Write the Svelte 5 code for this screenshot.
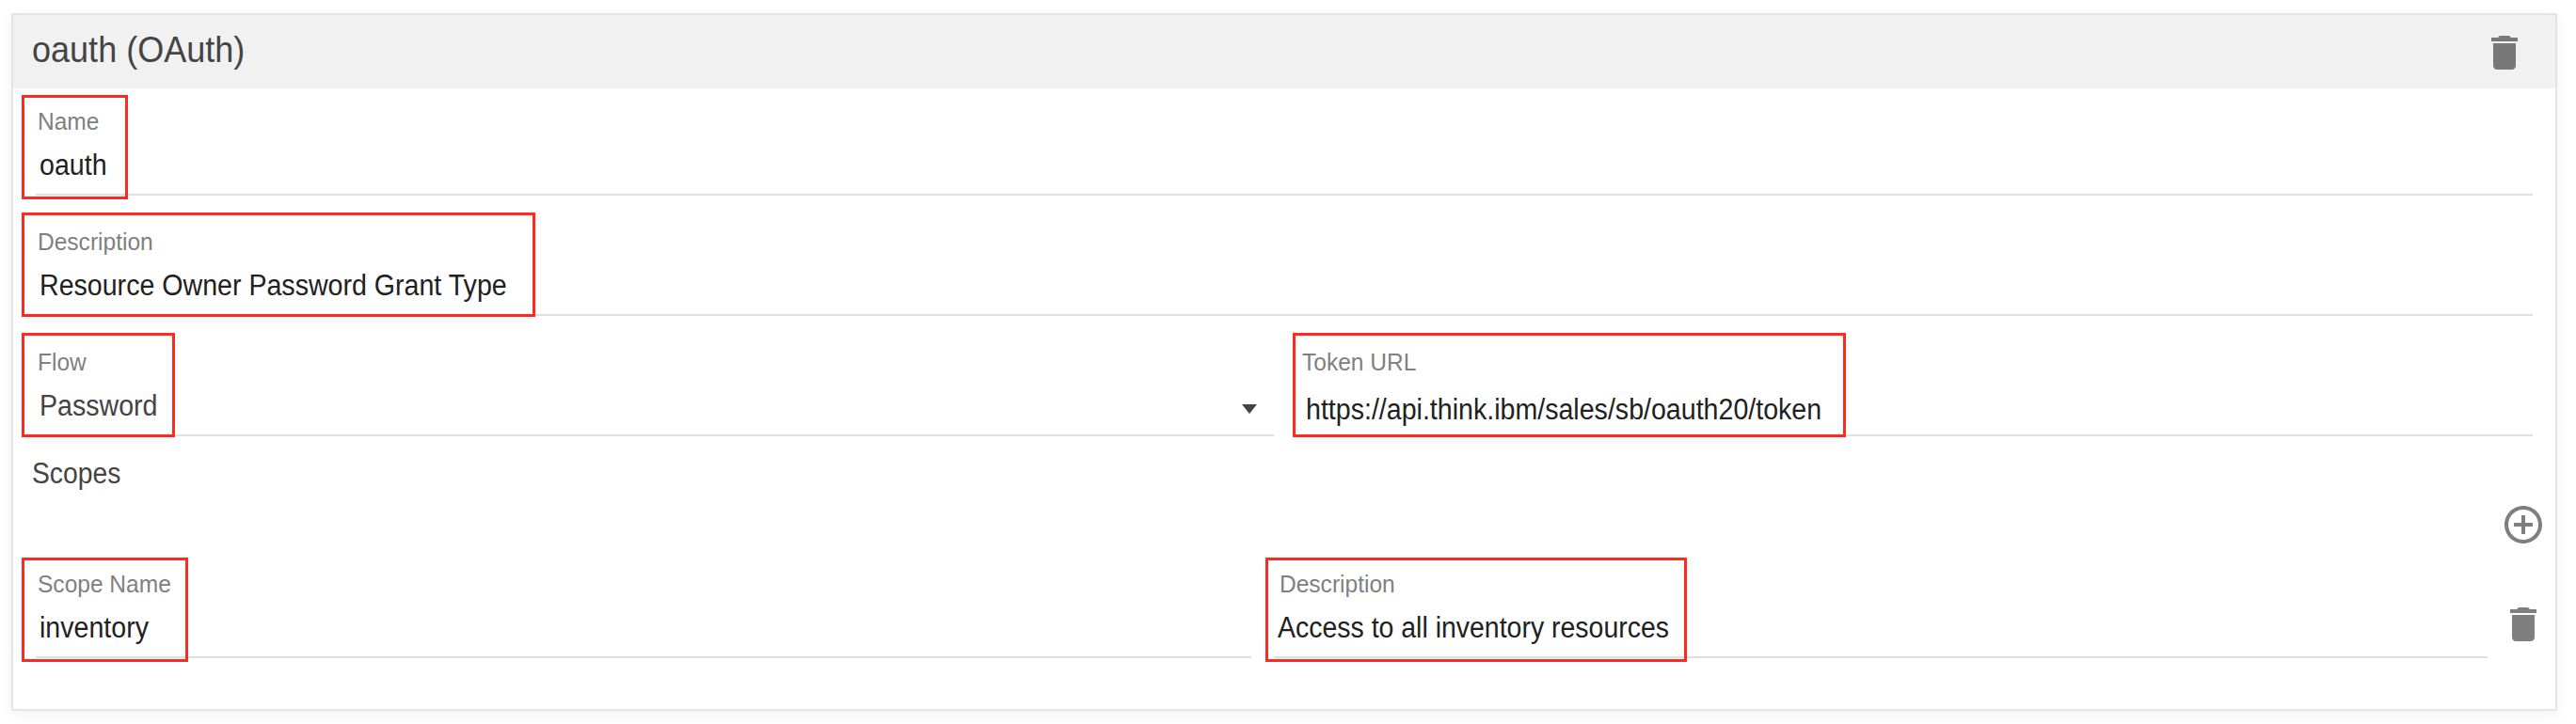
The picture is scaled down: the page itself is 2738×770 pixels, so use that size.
<script>
  const mainFields = [
    { label: 'Name', value: 'oauth', mark: 'name' },
    { label: 'Description', value: 'Resource Owner Password Grant Type', mark: 'description' }
  ];
</script>

{#snippet trash()}
  <svg class="icon" viewBox="0 0 24 24" aria-hidden="true">
    <path d="M6 19c0 1.1.9 2 2 2h8c1.1 0 2-.9 2-2V7H6v12zM19 4h-3.5l-1-1h-5l-1 1H5v2h14V4z" />
  </svg>
{/snippet}

{#snippet field(label, value, mark)}
  <div class="field {mark}">
    <div class="label"><span>{label}</span></div>
    <div class="value"><span>{value}</span></div>
    {#if mark === 'flow'}<i class="arrow"></i>{/if}
    <b class="mark"></b>
  </div>
{/snippet}

<section class="card">
  <header>
    <h2><span>oauth (OAuth)</span></h2>
    {@render trash()}
  </header>
  <div class="body">
    {#each mainFields as f}
      {@render field(f.label, f.value, f.mark)}
    {/each}
    <div class="row pair">
      {@render field('Flow', 'Password', 'flow')}
      {@render field('Token URL', 'https://api.think.ibm/sales/sb/oauth20/token', 'token')}
    </div>
    <div class="scopes"><span>Scopes</span></div>
    <div class="add">
      <svg class="icon" viewBox="0 0 24 24" aria-hidden="true">
        <path d="M13 7h-2v4H7v2h4v4h2v-4h4v-2h-4V7zm-1-5C6.48 2 2 6.48 2 12s4.48 10 10 10 10-4.480 10-10S17.520 2 12 2zm0 18c-4.410 0-8-3.590-8-8s3.590-8 8-8 8 3.590 8 8-3.590 8-8 8z" />
      </svg>
    </div>
    <div class="row scope-row">
      {@render field('Scope Name', 'inventory', 'scope')}
      {@render field('Description', 'Access to all inventory resources', 'access')}
      {@render trash()}
    </div>
  </div>
</section>

<style>
  :global(body) {
    background: #fff;
  }
  .card {
    box-sizing: border-box;
    width: 2706px;
    height: 742px;
    margin: 14px 0 14px 12px;
    border: 2px solid #e4e4e4;
    background: #fff;
    box-shadow: 0 4px 14px rgba(0, 0, 0, 0.06);
    font-family: 'Liberation Sans', Arial, sans-serif;
    color: #444;
  }
  header {
    box-sizing: border-box;
    display: flex;
    align-items: center;
    justify-content: space-between;
    height: 78px;
    padding: 0 30px 0 20px;
    background: #f1f1f1;
  }
  h2 {
    margin: 0;
    padding-bottom: 5px;
    font-size: 39px;
    font-weight: 400;
    line-height: 45px;
  }
  span {
    display: inline-block;
    white-space: nowrap;
    transform: scaleX(0.922);
    transform-origin: 0 50%;
  }
  h2 span {
    transform: scaleX(0.924);
  }
  .icon {
    display: block;
    flex: none;
    width: 48px;
    height: 48px;
    fill: rgba(0, 0, 0, 0.5);
  }
  header .icon {
    margin-top: 2px;
  }
  .body {
    display: flow-root;
    padding: 0 24px;
  }
  .field {
    position: relative;
    box-sizing: border-box;
    height: 112px;
    margin-top: 2px;
    padding-top: 18px;
    border-bottom: 2px solid #dfdfdf;
  }
  .field + .field,
  .row {
    margin-top: 16px;
  }
  .label {
    height: 30px;
    padding-left: 2px;
    font-size: 25.5px;
    line-height: 30px;
    color: #808080;
  }
  .label span {
    transform: scaleX(0.962);
  }
  .value {
    height: 36px;
    margin-top: 14px;
    padding-left: 4px;
    font-size: 31px;
    line-height: 36px;
    color: #212121;
  }
  .flow .value {
    color: #444;
  }
  .token .value {
    margin-top: 18px;
    padding-left: 6px;
  }
  .access .label {
    padding-left: 6px;
  }
  .access .value {
    padding-left: 4px;
  }
  .access .value span {
    transform: scaleX(0.918);
  }
  .row {
    display: flex;
  }
  .row .field {
    margin-top: 0;
  }
  .pair {
    gap: 28px;
  }
  .flow {
    width: 1316px;
  }
  .token {
    flex: 1;
  }
  .scopes {
    height: 36px;
    margin: 22px 0 0 -4px;
    font-size: 31px;
    line-height: 36px;
  }
  .scopes span {
    transform: scaleX(0.912);
  }
  .add {
    display: flex;
    justify-content: flex-end;
    margin: 12px -14px 0 0;
  }
  .scope-row {
    gap: 24px;
    margin: 6px -14px 0 0;
  }
  .scope {
    width: 1292px;
  }
  .access {
    width: 1290px;
  }
  .scope-row > .icon {
    margin: 52px 0 0 -10px;
  }
  .arrow {
    position: absolute;
    top: 78px;
    right: 18px;
    width: 16px;
    height: 10px;
    background: #444;
    clip-path: polygon(0 0, 100% 0, 50% 100%);
  }
  .mark {
    position: absolute;
    top: 2px;
    left: -15px;
    box-sizing: border-box;
    width: 113px;
    height: 111px;
    border: 3px solid #ff2a1f;
  }
  .name .mark,
  .scope .mark,
  .access .mark {
    top: 5px;
  }
  .description .mark {
    width: 546px;
  }
  .flow .mark {
    width: 163px;
  }
  .token .mark {
    left: -8px;
    width: 588px;
  }
  .scope .mark {
    width: 177px;
  }
  .access .mark {
    left: -9px;
    width: 448px;
  }
</style>
